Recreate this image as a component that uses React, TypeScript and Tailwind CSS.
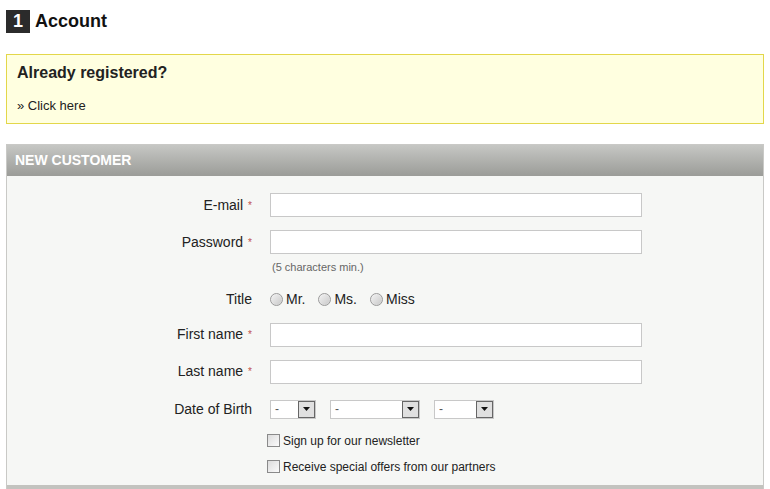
import React from 'react';

const font = { fontFamily: '"Liberation Sans", Arial, sans-serif' };

function Req() {
  return <span className="ml-[5px] text-[10px] leading-none text-[#c0504d] relative top-[-1px]">*</span>;
}

function Label({ text, req }: { text: string; req?: boolean }) {
  return (
    <div className="w-[246px] shrink-0 text-right text-[14px] text-[#222] pr-[1px]">
      {text}
      {req && <Req />}
    </div>
  );
}

function TextRow({ label, req, className = '' }: { label: string; req?: boolean; className?: string }) {
  return (
    <div className={`flex items-center ${className}`}>
      <Label text={label} req={req} />
      <input className="ml-[17px] w-[372px] h-[24px] border border-[#c8c8c8] bg-white outline-none" />
    </div>
  );
}

function Radio({ label }: { label: string }) {
  return (
    <label className="flex items-center mr-[13px]">
      <span className="w-[13px] h-[13px] rounded-full border border-[#9a9a9a] bg-gradient-to-br from-[#f4f4f4] to-[#c8c8c8] shadow-[inset_0_0_1px_#fff]" />
      <span className="ml-[3px] text-[14px] text-[#222]">{label}</span>
    </label>
  );
}

function Select({ w }: { w: string }) {
  return (
    <div className={`${w} h-[19px] border border-[#c8c8c8] bg-white flex items-center justify-between`}>
      <span className="ml-[4px] text-[12px] text-[#555] leading-none">-</span>
      <span className="w-[17px] h-[17px] border border-[#666] bg-[#e0e0e0] flex items-center justify-center">
        <svg width="7" height="4" viewBox="0 0 7 4"><path d="M0 0h7L3.5 4z" fill="#111" /></svg>
      </span>
    </div>
  );
}

function Check({ label, className = '' }: { label: string; className?: string }) {
  return (
    <div className={`flex items-center pl-[260px] ${className}`}>
      <span className="w-[13px] h-[13px] border border-[#8a8a8a] bg-gradient-to-br from-[#dcdcdc] to-[#fbfbfb]" />
      <span className="ml-[3px] text-[12px] text-[#222]">{label}</span>
    </div>
  );
}

export default function App() {
  return (
    <div className="w-[770px] h-[489px] bg-white overflow-hidden" style={font}>
      <div className="pl-[6px] pt-[10px] flex items-center h-[23px] box-content">
        <span className="w-[24px] h-[23px] bg-[#2b2b2b] text-white text-[18px] font-bold flex items-center justify-center">1</span>
        <h1 className="ml-[5px] text-[18px] font-bold text-[#111]">Account</h1>
      </div>

      <div className="mx-[6px] mt-[21px] h-[70px] border border-[#e3d74a] bg-[#ffffe0] px-[10px] pt-[8px]">
        <h3 className="text-[16px] font-bold text-[#222] leading-[20px]">Already registered?</h3>
        <p className="mt-[13px] text-[13px] text-[#222]">» Click here</p>
      </div>

      <div className="mx-[6px] mt-[20px] border border-[#c9c9c6] bg-[#f6f7f5] h-[347px] flex flex-col">
        <div className="h-[31px] bg-gradient-to-b from-[#c6c7c4] to-[#9b9c98] flex items-center pl-[8px]">
          <span className="text-white text-[14px] font-bold">NEW CUSTOMER</span>
        </div>
        <div className="flex-1 pt-[17px]">
          <TextRow label="E-mail" req />
          <TextRow label="Password" req className="mt-[13px]" />
          <div className="pl-[265px] mt-[5px] text-[11px] text-[#666]">(5 characters min.)</div>
          <div className="flex items-center mt-[13px]">
            <Label text="Title" />
            <div className="ml-[17px] flex items-center">
              <Radio label="Mr." />
              <Radio label="Ms." />
              <Radio label="Miss" />
            </div>
          </div>
          <TextRow label="First name" req className="mt-[13px]" />
          <TextRow label="Last name" req className="mt-[13px]" />
          <div className="flex items-center mt-[15px]">
            <Label text="Date of Birth" />
            <div className="ml-[17px] flex items-center gap-[14px]">
              <Select w="w-[46px]" />
              <Select w="w-[90px]" />
              <Select w="w-[60px]" />
            </div>
          </div>
          <Check label="Sign up for our newsletter" className="mt-[12px]" />
          <Check label="Receive special offers from our partners" className="mt-[8px]" />
        </div>
        <div className="h-[5px] bg-[#c3c3bf]" />
      </div>
    </div>
  );
}
